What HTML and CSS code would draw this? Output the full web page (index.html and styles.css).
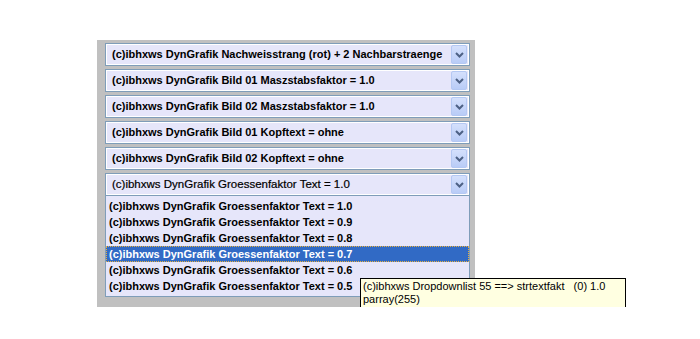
FILE: index.html
```html
<!DOCTYPE html>
<html lang="de">
<head>
    <meta charset="UTF-8">
    <meta name="viewport" content="width=device-width, initial-scale=1.0">
    <title>DynGrafik</title>
    <link rel="stylesheet" href="styles.css">
</head>
<body>
    <div class="page">
        <div class="panel">
            <div class="select">
                <span class="value">(c)ibhxws DynGrafik Nachweisstrang (rot) + 2 Nachbarstraenge</span>
                <span class="arrow"><svg width="9" height="6" viewBox="0 0 9 6"><path d="M1 1l3.5 3.5L8 1" fill="none" stroke="#4d6185" stroke-width="2"/></svg></span>
            </div>
            <div class="select">
                <span class="value">(c)ibhxws DynGrafik Bild 01 Maszstabsfaktor = 1.0</span>
                <span class="arrow"><svg width="9" height="6" viewBox="0 0 9 6"><path d="M1 1l3.5 3.5L8 1" fill="none" stroke="#4d6185" stroke-width="2"/></svg></span>
            </div>
            <div class="select">
                <span class="value">(c)ibhxws DynGrafik Bild 02 Maszstabsfaktor = 1.0</span>
                <span class="arrow"><svg width="9" height="6" viewBox="0 0 9 6"><path d="M1 1l3.5 3.5L8 1" fill="none" stroke="#4d6185" stroke-width="2"/></svg></span>
            </div>
            <div class="select">
                <span class="value">(c)ibhxws DynGrafik Bild 01 Kopftext = ohne</span>
                <span class="arrow"><svg width="9" height="6" viewBox="0 0 9 6"><path d="M1 1l3.5 3.5L8 1" fill="none" stroke="#4d6185" stroke-width="2"/></svg></span>
            </div>
            <div class="select">
                <span class="value">(c)ibhxws DynGrafik Bild 02 Kopftext = ohne</span>
                <span class="arrow"><svg width="9" height="6" viewBox="0 0 9 6"><path d="M1 1l3.5 3.5L8 1" fill="none" stroke="#4d6185" stroke-width="2"/></svg></span>
            </div>
            <div class="dropdown">
                <div class="select open">
                    <span class="value">(c)ibhxws DynGrafik Groessenfaktor Text = 1.0</span>
                    <span class="arrow"><svg width="9" height="6" viewBox="0 0 9 6"><path d="M1 1l3.5 3.5L8 1" fill="none" stroke="#4d6185" stroke-width="2"/></svg></span>
                </div>
                <ul class="list">
                    <li>(c)ibhxws DynGrafik Groessenfaktor Text = 1.0</li>
                    <li>(c)ibhxws DynGrafik Groessenfaktor Text = 0.9</li>
                    <li>(c)ibhxws DynGrafik Groessenfaktor Text = 0.8</li>
                    <li class="active">(c)ibhxws DynGrafik Groessenfaktor Text = 0.7</li>
                    <li>(c)ibhxws DynGrafik Groessenfaktor Text = 0.6</li>
                    <li>(c)ibhxws DynGrafik Groessenfaktor Text = 0.5</li>
                </ul>
                <div class="tooltip">(c)ibhxws Dropdownlist 55 ==&gt; strtextfakt   (0) 1.0
parray(255)</div>
            </div>
        </div>
    </div>
</body>
</html>
```

FILE: styles.css
```css
body{
    margin:0;
    background:#fff;
    font-family:"Liberation Sans", Arial, sans-serif;
}
.page{
    padding:40px 0 0 97px;
}
.panel{
    width:378px;
    height:267px;
    box-sizing:border-box;
    background:#c0c0c0;
    padding:3px 5px 0 8px;
    display:flex;
    flex-direction:column;
    gap:3px;
}
.select{
    height:23px;
    box-sizing:border-box;
    border:1px solid #7f9db9;
    background:#e6e6fa;
    padding:1px 1px 1px 0;
    display:flex;
    align-items:stretch;
    box-shadow:inset 0 0 0 1px #fff;
}
.select .value{
    flex:1;
    padding-left:6px;
    font-size:11px;
    font-weight:bold;
    line-height:19px;
    color:#000;
    white-space:nowrap;
    overflow:hidden;
}
.select .arrow{
    width:16px;
    margin:0 1px 0 2px;
    box-sizing:border-box;
    border:1px solid #b4c8f3;
    border-radius:2px;
    background:linear-gradient(#d4e0fc,#b9ccf7);
    display:flex;
    align-items:center;
    justify-content:center;
}
.select.open .value{
    font-size:11.5px;
    font-weight:normal;
    -webkit-text-stroke:0.2px #000;
}
.dropdown{
    position:relative;
    flex-shrink:0;
}
.list{
    margin:0;
    padding:2px 0 2px;
    list-style:none;
    border:1px solid #7f9db9;
    border-top:none;
    background:#e6e6fa;
}
.list li{
    height:16px;
    line-height:16px;
    padding-left:3px;
    font-size:11px;
    font-weight:bold;
    color:#000;
    white-space:nowrap;
    box-sizing:border-box;
}
.list li.active{
    background:#316ac5;
    color:#fff;
    outline:1px dotted #e8b040;
    outline-offset:-1px;
}
.tooltip{
    position:absolute;
    left:255px;
    top:105px;
    width:266px;
    box-sizing:border-box;
    border:1px solid #000;
    background:#ffffe1;
    padding:1px 2px;
    font-family:"Liberation Sans", Tahoma, sans-serif;
    font-size:11px;
    line-height:13px;
    color:#000;
    white-space:pre;
}
```
